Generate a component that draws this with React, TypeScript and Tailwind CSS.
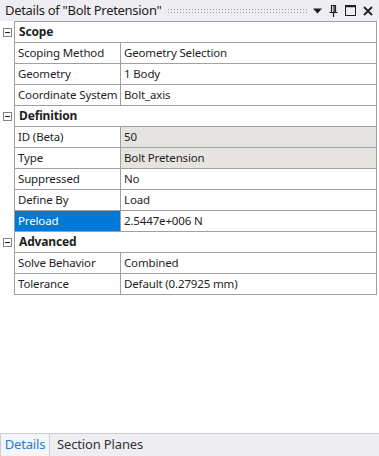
import React from "react";

type Row = {
  label: string;
  value: string;
  shaded?: boolean;
  selected?: boolean;
};

type Group = { title: string; rows: Row[] };

const GROUPS: Group[] = [
  {
    title: "Scope",
    rows: [
      { label: "Scoping Method", value: "Geometry Selection" },
      { label: "Geometry", value: "1 Body" },
      { label: "Coordinate System", value: "Bolt_axis" },
    ],
  },
  {
    title: "Definition",
    rows: [
      { label: "ID (Beta)", value: "50", shaded: true },
      { label: "Type", value: "Bolt Pretension", shaded: true },
      { label: "Suppressed", value: "No" },
      { label: "Define By", value: "Load" },
      { label: "Preload", value: "2.5447e+006 N", selected: true },
    ],
  },
  {
    title: "Advanced",
    rows: [
      { label: "Solve Behavior", value: "Combined" },
      { label: "Tolerance", value: "Default (0.27925 mm)" },
    ],
  },
];

function TitleIcons() {
  return (
    <div className="flex items-center gap-[7px] pr-[6px]">
      <svg width="9" height="6" viewBox="0 0 9 6">
        <path d="M0 0.5 H9 L4.5 5.5 Z" fill="#1e1e1e" />
      </svg>
      <svg width="9" height="12" viewBox="0 0 9 12">
        <path d="M2 0.5 H7 M2.5 0.5 V7 M6.5 0.5 V7 M5 1 V7 M0.5 7.5 H8.5 M4.5 7.5 V12" stroke="#1e1e1e" strokeWidth="1.2" fill="none" />
      </svg>
      <svg width="11" height="11" viewBox="0 0 11 11">
        <rect x="0.5" y="0.5" width="10" height="10" stroke="#1e1e1e" fill="none" />
        <path d="M0.5 1.5 H10.5" stroke="#1e1e1e" strokeWidth="1.5" />
      </svg>
      <svg width="10" height="10" viewBox="0 0 10 10">
        <path d="M1 1 L9 9 M9 1 L1 9" stroke="#1e1e1e" strokeWidth="1.8" />
      </svg>
    </div>
  );
}

function Collapse() {
  return (
    <svg width="9" height="9" viewBox="0 0 9 9">
      <rect x="0.5" y="0.5" width="8" height="8" fill="#fff" stroke="#848484" />
      <path d="M2 4.5 H7" stroke="#1e1e1e" />
    </svg>
  );
}

export default function App() {
  return (
    <div className="flex h-[456px] w-[379px] flex-col bg-white font-['Noto_Sans','Liberation_Sans',sans-serif] text-[11.5px] tracking-[-0.15px] text-[#1e1e1e]">
      <div className="flex h-[21px] shrink-0 items-center bg-[#eeeef2]">
        <span className="whitespace-nowrap pl-[5px] text-[13px] tracking-[-0.3px] text-[#1e1e1e]">Details of "Bolt Pretension"</span>
        <div className="mx-[5px] h-[5px] flex-1 bg-[radial-gradient(circle,#9a9a9a_0.7px,transparent_0.9px)] bg-[length:3px_3px]" />
        <TitleIcons />
      </div>

      <div className="flex w-[377px] flex-col">
        {GROUPS.map((g, gi) => (
          <div key={g.title} className="flex flex-col">
            <div className={`flex ${gi === 0 ? "h-[22px]" : "h-[21px]"}`}>
              <div className="flex w-[14px] items-center justify-center pl-[1px]">
                <Collapse />
              </div>
              <div
                className={`flex flex-1 items-center border-b border-l border-r border-[#a0a0a0] pl-[4px] text-[12px] font-bold ${
                  gi === 0 ? "border-t" : ""
                }`}
              >
                {g.title}
              </div>
            </div>
            {g.rows.map((r) => (
              <div key={r.label} className="flex h-[21px]">
                <div className="w-[14px]" />
                <div
                  className={`flex w-[106px] items-center overflow-hidden whitespace-nowrap border-b border-l border-[#a0a0a0] pl-[3px] ${
                    r.selected ? "bg-[#0078d7] text-white" : ""
                  }`}
                >
                  {r.label}
                </div>
                <div
                  className={`flex flex-1 items-center whitespace-nowrap border-b border-l border-r border-[#a0a0a0] pl-[3px] ${
                    r.shaded ? "bg-[#e6e4e0]" : ""
                  }`}
                >
                  {r.value}
                </div>
              </div>
            ))}
          </div>
        ))}
      </div>

      <div className="flex-1" />

      <div className="flex h-[23px] shrink-0 items-stretch border-t border-[#ccccdc] bg-[#eeeef2]">
        <div className="flex w-[50px] items-center justify-center border-l border-r border-[#ccccdc] bg-[#f5f5f7] text-[13px] text-[#1a7fd6]">
          Details
        </div>
        <div className="flex items-center pl-[7px] text-[13px] text-[#333]">Section Planes</div>
      </div>
    </div>
  );
}
